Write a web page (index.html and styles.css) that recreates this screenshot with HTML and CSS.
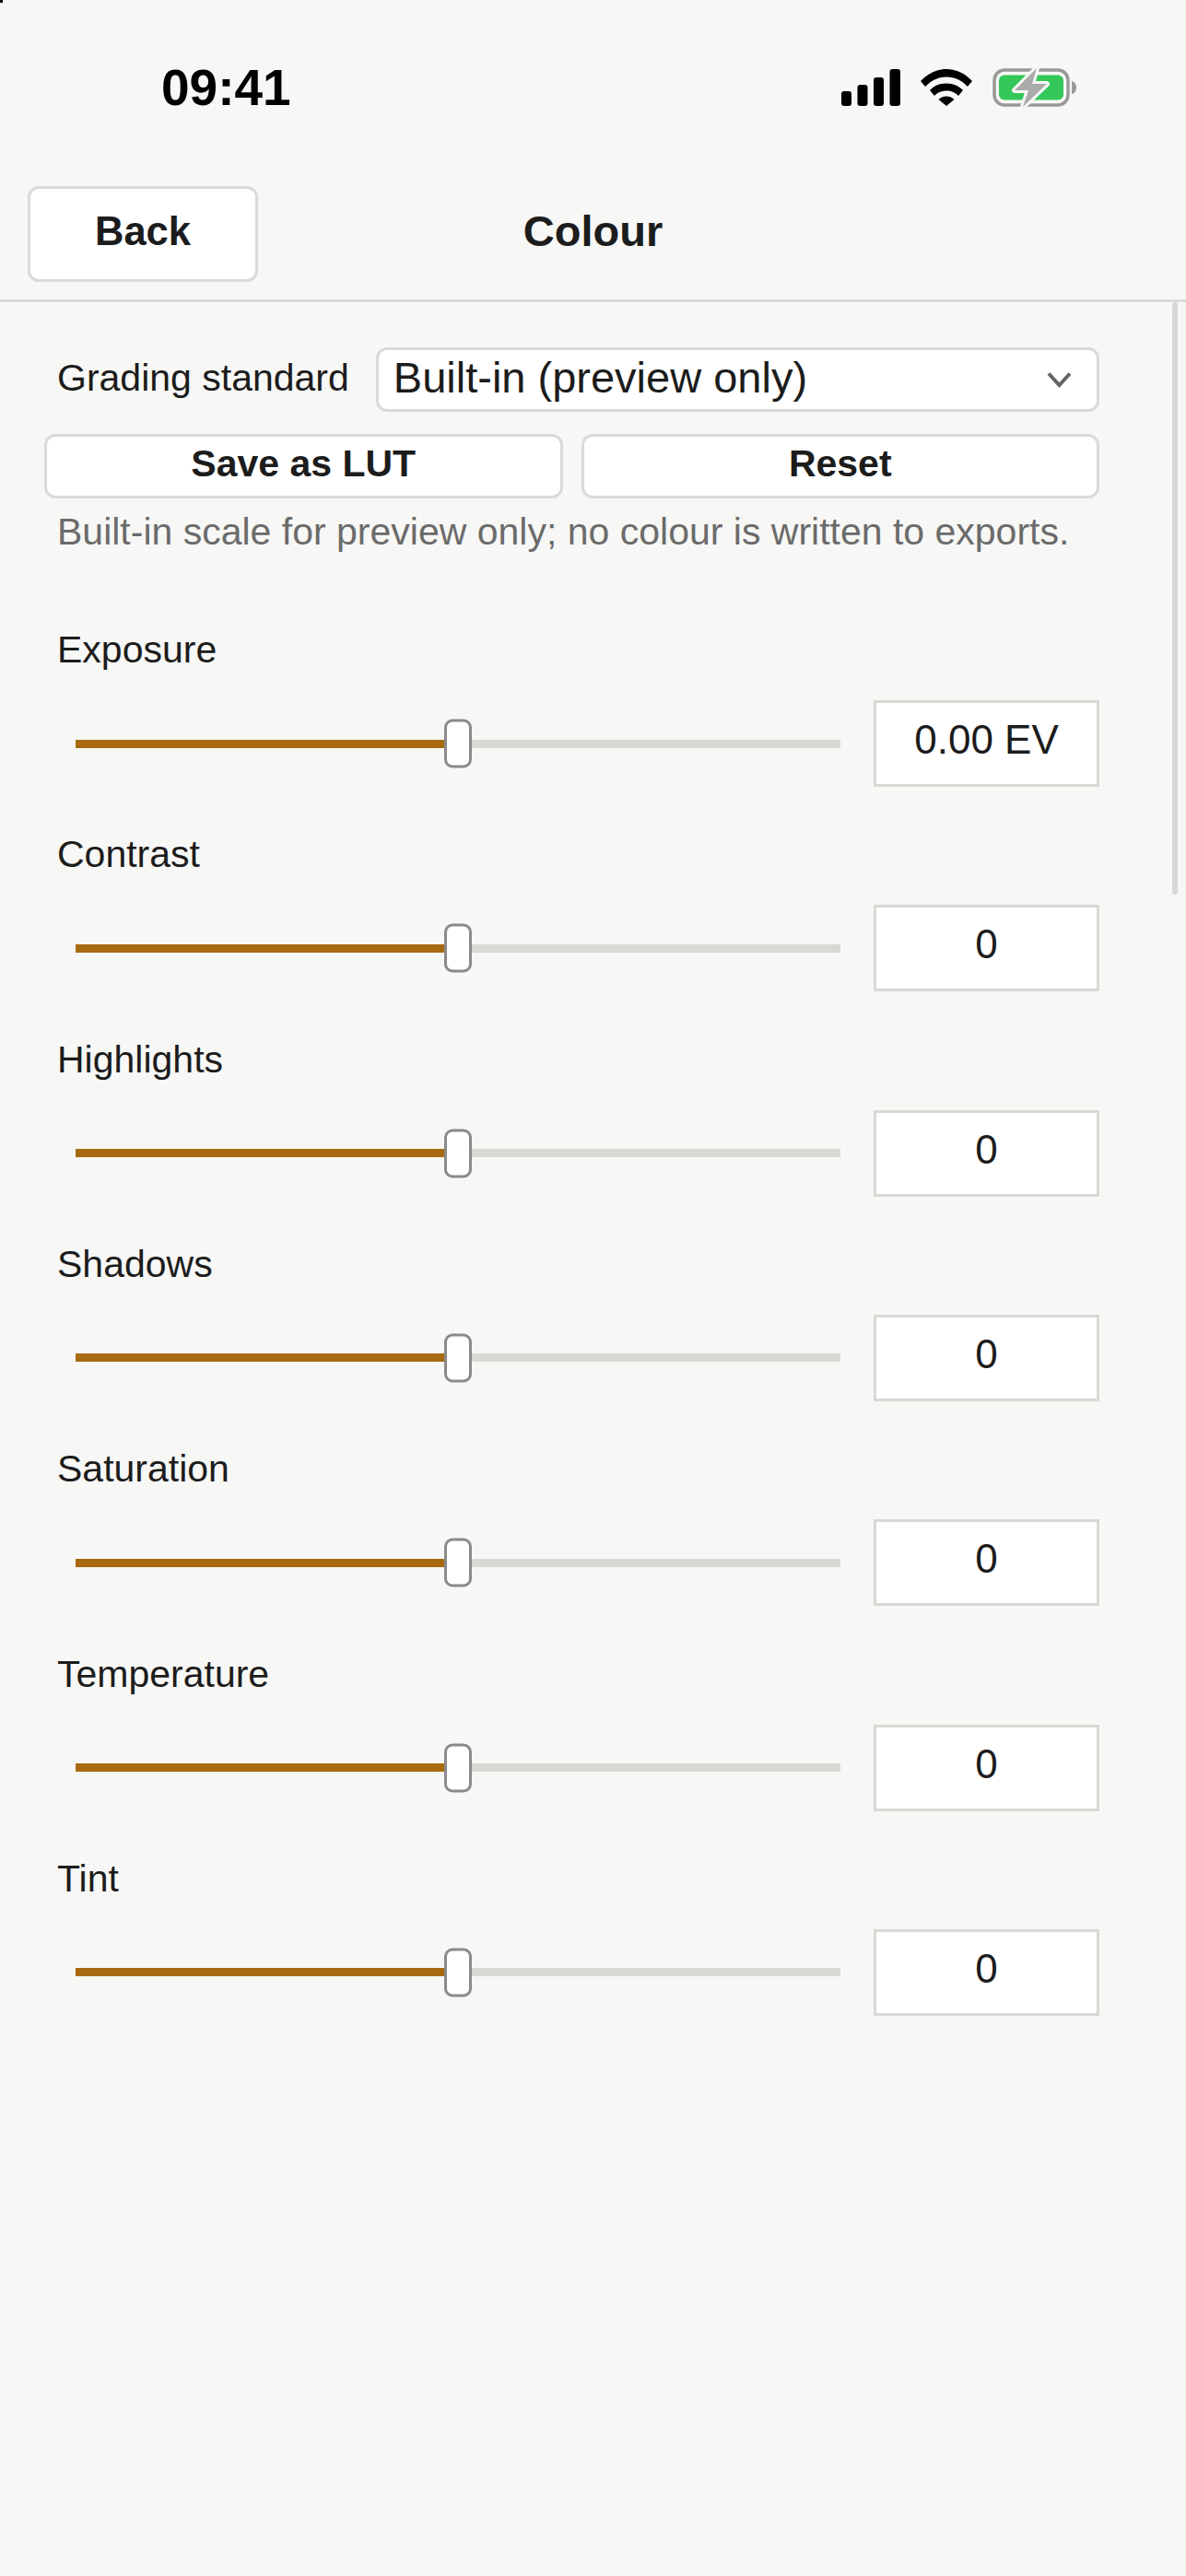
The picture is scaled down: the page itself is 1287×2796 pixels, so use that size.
FILE: index.html
```html
<!DOCTYPE html>
<html lang="en">
<head>
    <meta charset="UTF-8">
    <meta name="viewport" content="width=device-width, initial-scale=1.0">
    <title>Colour</title>
    <link rel="stylesheet" href="styles.css">
</head>
<body>
    <div class="corner"></div>
    <div class="status">
        <span class="time">09:41</span>
        <div class="status-icons">
            <svg width="64" height="40" viewBox="0 0 64 40">
                <rect x="0" y="24" width="11" height="16" rx="3"/>
                <rect x="17.500" y="17" width="11" height="23" rx="3"/>
                <rect x="35" y="9" width="11" height="31" rx="3"/>
                <rect x="52.500" y="0" width="11.500" height="40" rx="3"/>
            </svg>
            <svg class="wifi" width="56" height="40" viewBox="0 0 56 40">
                <path d="M0 13C7.500 5 17 0 28 0S48.500 5 56 13L51 19C45 12.500 37 8.500 28 8.500S11 12.500 5 19Z"/>
                <path d="M10 23C14 18.500 20.500 15.500 28 15.500S42 18.500 46 23L41 29C38 25.500 33 23.500 28 23.500S18 25.500 15 29Z"/>
                <path d="M19.500 33C22 30.500 25 29.500 28 29.500S34 30.500 36.500 33L28 40Z"/>
            </svg>
            <svg class="battery" width="91" height="42" viewBox="0 0 91 42">
                <rect x="2" y="2" width="80" height="38" rx="11" fill="none" stroke="#999" stroke-width="3.500"/>
                <path d="M86 14C89 14.500 91 17 91 21S89 27.500 86 28Z" fill="#999"/>
                <rect x="7" y="7.500" width="70" height="27" rx="6" fill="#34c759"/>
                <path d="M48 0L24 24H39L33 42L59 17H43Z" fill="#ababab" stroke="#f7f7f5" stroke-width="6" stroke-linejoin="round" paint-order="stroke"/>
            </svg>
        </div>
    </div>

    <header class="topbar">
        <button class="btn back-btn">Back</button>
        <h1>Colour</h1>
    </header>

    <main class="content">
        <div class="standard-row">
            <label>Grading standard</label>
            <div class="select">
                <span>Built-in (preview only)</span>
                <svg width="27" height="18" viewBox="0 0 27 18"><path d="M2 2.500L13.500 15L25 2.500" fill="none" stroke="#666" stroke-width="4"/></svg>
            </div>
        </div>
        <div class="btn-row">
            <button class="btn">Save as LUT</button>
            <button class="btn">Reset</button>
        </div>
        <p class="note">Built-in scale for preview only; no colour is written to exports.</p>

        <div class="sliders">
            <div class="slider-row">
                <label>Exposure</label>
                <div class="slider-line">
                    <div class="track"><div class="fill"></div><div class="thumb"></div></div>
                    <div class="value">0.00 EV</div>
                </div>
            </div>
            <div class="slider-row">
                <label>Contrast</label>
                <div class="slider-line">
                    <div class="track"><div class="fill"></div><div class="thumb"></div></div>
                    <div class="value">0</div>
                </div>
            </div>
            <div class="slider-row">
                <label>Highlights</label>
                <div class="slider-line">
                    <div class="track"><div class="fill"></div><div class="thumb"></div></div>
                    <div class="value">0</div>
                </div>
            </div>
            <div class="slider-row">
                <label>Shadows</label>
                <div class="slider-line">
                    <div class="track"><div class="fill"></div><div class="thumb"></div></div>
                    <div class="value">0</div>
                </div>
            </div>
            <div class="slider-row">
                <label>Saturation</label>
                <div class="slider-line">
                    <div class="track"><div class="fill"></div><div class="thumb"></div></div>
                    <div class="value">0</div>
                </div>
            </div>
            <div class="slider-row">
                <label>Temperature</label>
                <div class="slider-line">
                    <div class="track"><div class="fill"></div><div class="thumb"></div></div>
                    <div class="value">0</div>
                </div>
            </div>
            <div class="slider-row">
                <label>Tint</label>
                <div class="slider-line">
                    <div class="track"><div class="fill"></div><div class="thumb"></div></div>
                    <div class="value">0</div>
                </div>
            </div>
        </div>
        <div class="scrollbar"></div>
    </main>
</body>
</html>
```

FILE: styles.css
```css
body {
    font-family: 'Liberation Sans', Arial, sans-serif;
    margin: 0;
    min-height: 100vh;
    background-color: #F7F7F5;
    color: #1C1C1C;
    font-size: 41px;
}
.corner {
    position: absolute;
    top: 0;
    left: 0;
    width: 3px;
    height: 3px;
    background: #000;
}
.status {
    height: 190px;
    padding: 0 119px 0 175px;
    display: flex;
    justify-content: space-between;
    align-items: center;
    color: #000;
}
.time {
    font-size: 55px;
    font-weight: bold;
}
.status-icons {
    display: flex;
    align-items: center;
    gap: 22px;
}
.topbar {
    height: 123px;
    padding: 12px 30px 0;
    display: grid;
    grid-template-columns: 1fr auto 1fr;
    align-items: start;
    border-bottom: 3px solid #DADAD8;
}
.topbar h1 {
    margin: 0;
    font-size: 47px;
    line-height: 98px;
}
.btn {
    font-family: inherit;
    font-size: 41px;
    font-weight: bold;
    color: #1C1C1C;
    background: #FFFFFF;
    border: 3px solid #DADAD8;
    border-radius: 12px;
    padding: 0 0 6px;
    height: 70px;
}
.back-btn {
    width: 250px;
    height: 104px;
    font-size: 43.500px;
}
.content {
    position: relative;
    padding: 49px 94px 0 48px;
}
.standard-row {
    display: flex;
    align-items: center;
    gap: 29px;
    padding-left: 14px;
}
.standard-row label {
    margin-bottom: 4px;
}
.select {
    flex: 1;
    height: 70px;
    box-sizing: border-box;
    display: flex;
    align-items: center;
    justify-content: space-between;
    padding: 0 27px 0 16px;
    background: #FFFFFF;
    border: 3px solid #DADAD8;
    border-radius: 12px;
    font-size: 47px;
}
.select span {
    margin-bottom: 6px;
}
.btn-row {
    display: grid;
    grid-template-columns: 1fr 1fr;
    gap: 20px;
    margin-top: 24px;
}
.note {
    margin: 12px 0 0 14px;
    line-height: 48px;
    color: #6B6B6B;
    white-space: nowrap;
}
.sliders {
    display: flex;
    flex-direction: column;
    gap: 49.330px;
    margin-top: 80px;
    padding-left: 14px;
}
.slider-row label {
    display: block;
    line-height: 48px;
    margin-bottom: 31px;
}
.slider-line {
    display: flex;
    align-items: center;
}
.track {
    position: relative;
    flex: 1;
    height: 9px;
    margin: 0 36px 0 20px;
    background: #D8D8D4;
}
.fill {
    width: 50%;
    height: 100%;
    background: #A86A10;
}
.thumb {
    position: absolute;
    left: 50%;
    top: 50%;
    width: 30px;
    height: 53px;
    box-sizing: border-box;
    transform: translate(-50%, -50%);
    background: #FFFFFF;
    border: 3px solid #8A8A8A;
    border-radius: 9px;
}
.value {
    width: 245px;
    height: 94px;
    box-sizing: border-box;
    padding-bottom: 8px;
    display: flex;
    align-items: center;
    justify-content: center;
    background: #FFFFFF;
    border: 3px solid #D8D8D4;
    font-size: 44px;
    color: #1C1C1C;
}
.scrollbar {
    position: absolute;
    top: 0;
    left: 1272px;
    width: 6px;
    height: 643px;
    background: #D8D8D6;
    border-radius: 3px;
}
```
